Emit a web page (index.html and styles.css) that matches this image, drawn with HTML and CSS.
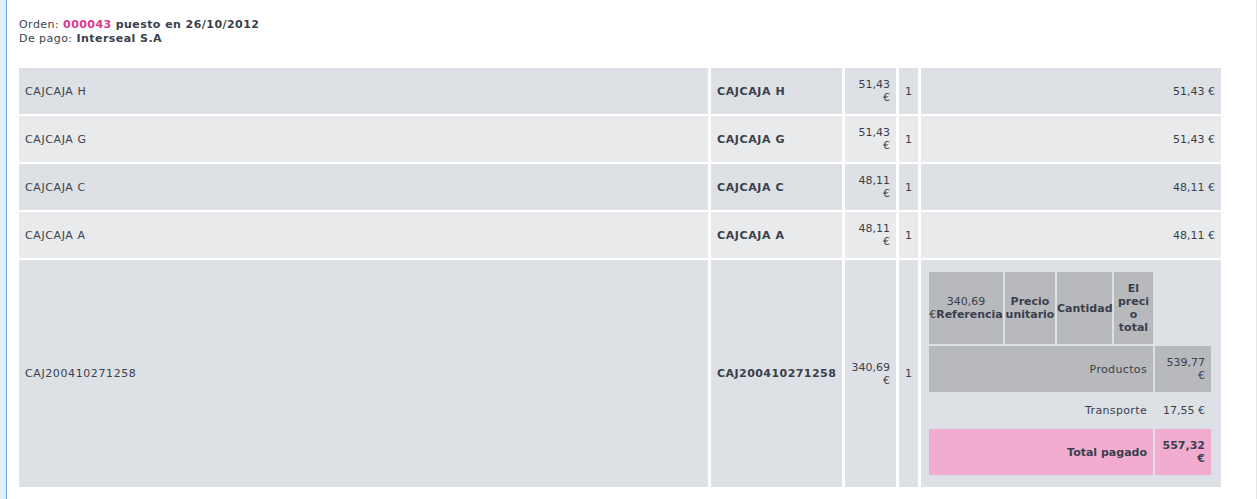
FILE: index.html
```html
<!DOCTYPE html>
<html lang="es">
<head>
<meta charset="utf-8">
<title>Orden 000043</title>
<link rel="stylesheet" href="styles.css">
</head>
<body>
<div class="page">
  <div class="rail"></div>
  <main class="main">
    <div class="order-info">
      <div>Orden: <b class="num">000043</b> <b>puesto en 26/10/2012</b></div>
      <div>De pago: <b>Interseal S.A</b></div>
    </div>
    <table class="items">
      <colgroup>
        <col class="c-name"><col class="c-ref"><col class="c-price"><col class="c-qty"><col class="c-total">
      </colgroup>
      <tr class="odd">
        <td class="name">CAJCAJA H</td><td class="ref">CAJCAJA H</td><td class="price">51,43 €</td><td>1</td><td class="right">51,43 €</td>
      </tr>
      <tr class="even">
        <td class="name">CAJCAJA G</td><td class="ref">CAJCAJA G</td><td class="price">51,43 €</td><td>1</td><td class="right">51,43 €</td>
      </tr>
      <tr class="odd">
        <td class="name">CAJCAJA C</td><td class="ref">CAJCAJA C</td><td class="price">48,11 €</td><td>1</td><td class="right">48,11 €</td>
      </tr>
      <tr class="even">
        <td class="name">CAJCAJA A</td><td class="ref">CAJCAJA A</td><td class="price">48,11 €</td><td>1</td><td class="right">48,11 €</td>
      </tr>
      <tr class="odd">
        <td class="name">CAJ200410271258</td><td class="ref long">CAJ200410271258</td><td class="price">340,69 €</td><td>1</td>
        <td class="nest">
          <table class="totals">
            <colgroup>
              <col class="t1"><col class="t2"><col class="t3"><col class="t4"><col class="t5">
            </colgroup>
            <tr>
              <td class="head"><span class="line">340,69</span> <span class="line">€<b>Referencia</b></span></td>
              <td class="head"><b>Precio unitario</b></td>
              <td class="head nowrap"><b>Cantidad</b></td>
              <td class="head narrow"><b>El precio total</b></td>
            </tr>
            <tr class="gray">
              <td colspan="4" class="right label">Productos</td>
              <td class="right">539,77 €</td>
            </tr>
            <tr>
              <td colspan="4" class="right label">Transporte</td>
              <td class="right">17,55 €</td>
            </tr>
            <tr class="pink">
              <td colspan="4" class="right"><b>Total pagado</b></td>
              <td class="right"><b>557,32 €</b></td>
            </tr>
          </table>
        </td>
      </tr>
    </table>
  </main>
</div>
</body>
</html>
```

FILE: styles.css
```css
body {
  margin: 0;
  font-family: "DejaVu Sans", Verdana, sans-serif;
  font-size: 11px;
  line-height: 13.5px;
  color: #3a3f4b;
  background: #fff;
}

.page {
  display: flex;
  min-height: 499px;
}

.rail {
  flex: none;
  width: 6px;
  background: #e3eefc;
  border-right: 1px solid #74a2e2;
}

.main {
  flex: 1;
  padding: 18px 0 0 12px;
  border-right: 1px solid #e6e6e6;
}

.order-info {
  margin-bottom: 21px;
  letter-spacing: 0.45px;
}

.num {
  color: #d9398a;
}

.items {
  border-spacing: 3px 2px;
  margin-left: -3px;
  table-layout: fixed;
  width: 1208px;
}

.c-name { width: 689px; }
.c-ref { width: 131px; }
.c-price { width: 51px; }
.c-qty { width: 19px; }
.c-total { width: 300px; }

.items td {
  padding: 10px 6px;
  line-height: 13px;
  vertical-align: middle;
  text-align: left;
}

.items tr.odd > td { background: #dde1e5; }
.items tr.even > td { background: #e9eaec; }

.items td.name {
  letter-spacing: 0.6px;
}

.items td.ref {
  font-weight: bold;
  white-space: nowrap;
  letter-spacing: 0.6px;
}

.items td.ref.long {
  letter-spacing: 0.45px;
}

.items td.price,
.items td.right,
.totals td.right {
  text-align: right;
}

.items td.nest {
  padding: 10px 6px;
}

.totals {
  border-spacing: 2px;
  table-layout: fixed;
  width: 286px;
}

.t1 { width: 74px; }
.t2 { width: 50px; }
.t3 { width: 55px; }
.t4 { width: 39px; }
.t5 { width: 56px; }

.totals td {
  padding: 10px 6px;
  line-height: 13px;
  vertical-align: middle;
  background: transparent;
}

.totals td.label {
  letter-spacing: 0.35px;
}

.totals td.head {
  padding: 10px 0;
  text-align: center;
  background: #b8b9bd;
}

.totals td.head .line {
  display: block;
  white-space: nowrap;
}

.totals td.nowrap {
  white-space: nowrap;
}

.totals td.narrow {
  padding: 10px 2px;
  overflow-wrap: anywhere;
}

.totals tr.gray td { background: #b8b9bd; }
.totals tr.pink td { background: #f2accf; }
```
